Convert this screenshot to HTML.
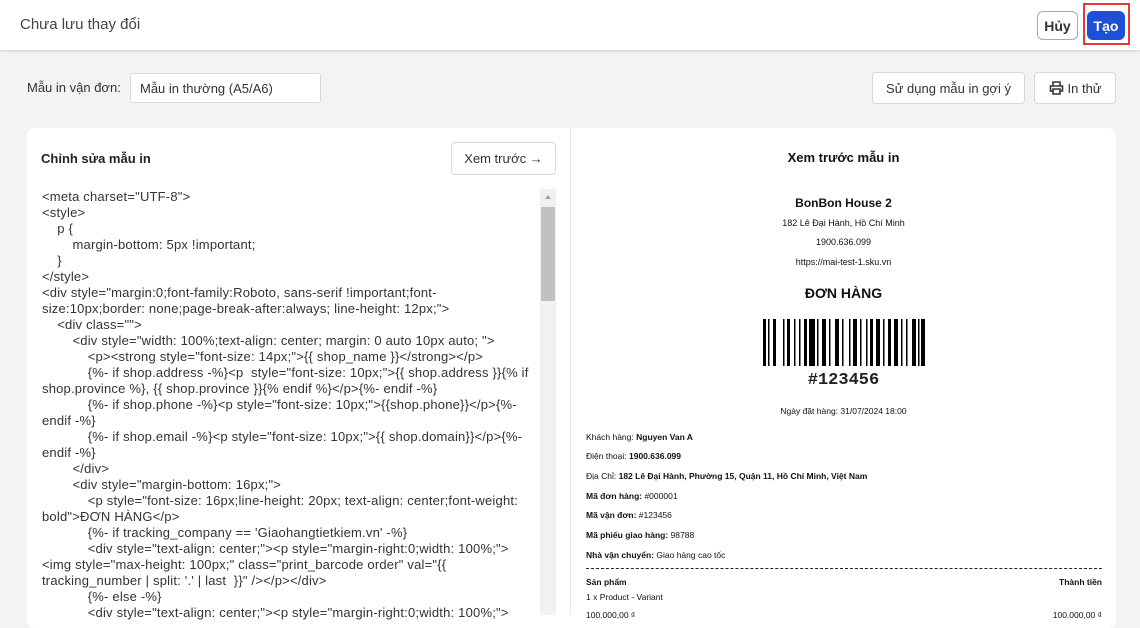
<!DOCTYPE html>
<html><head><meta charset="utf-8"><style>
*{margin:0;padding:0;box-sizing:border-box}
body{width:1140px;height:615px;overflow:hidden;background:#f2f3f5;font-family:"Liberation Sans",sans-serif;color:#222;position:relative}
.top{position:absolute;left:0;top:0;width:1140px;height:50px;background:#fff;box-shadow:0 1px 3px rgba(0,0,0,.15)}
.abs{position:absolute}
.btn{position:absolute;background:#fff;border:1px solid #d6d8dc;border-radius:4px;font-size:13px;color:#333;display:flex;align-items:center;justify-content:center}
.card{position:absolute;background:#fff;border-radius:8px}
.code{position:absolute;left:42px;top:189px;font-size:13px;line-height:16px;color:#333;white-space:pre;letter-spacing:0.2px}
.pv{position:absolute;left:571px;width:545px;text-align:center;color:#111}
.ln{position:absolute;left:586px;font-size:8.5px;color:#111;white-space:nowrap}
.ln b{font-weight:bold}
</style></head><body>
<div class="top"></div>
<div class="abs" style="left:20px;top:16px;font-size:15px;color:#444">Chưa lưu thay đổi</div>
<div class="btn" style="left:1037px;top:11px;width:41px;height:29px;border-color:#aaa;border-radius:6px;font-weight:bold;font-size:14px">Hủy</div>
<div class="abs" style="left:1083px;top:3px;width:47px;height:42px;border:2px solid #e53935"></div>
<div class="abs" style="left:1087px;top:11px;width:38px;height:29px;background:#1e4fd8;border-radius:6px;color:#fff;font-weight:bold;font-size:14px;display:flex;align-items:center;justify-content:center">Tạo</div>

<div class="abs" style="left:27px;top:80px;font-size:13px;color:#333">Mẫu in vận đơn:</div>
<div class="abs" style="left:130px;top:73px;width:191px;height:30px;background:#fff;border:1px solid #d6d8dc;border-radius:3px;font-size:13px;padding:7px 9px;color:#333">Mẫu in thường (A5/A6)</div>
<div class="btn" style="left:872px;top:72px;width:153px;height:32px">Sử dụng mẫu in gợi ý</div>
<div class="btn" style="left:1034px;top:72px;width:82px;height:32px"><svg width="15" height="14" viewBox="0 0 15 14" style="margin-right:4px"><path d="M4 5V1h7v4M4 10H1.5V5h12v5H11M4 8h7v5H4z" fill="none" stroke="#333" stroke-width="1.6"/></svg>In thử</div>

<div class="card" style="left:27px;top:128px;width:1089px;height:500px"></div>
<div class="abs" style="left:570px;top:128px;width:1px;height:487px;background:#e6e7ea"></div>
<div class="abs" style="left:41px;top:151px;font-size:13px;font-weight:bold;color:#222">Chỉnh sửa mẫu in</div>
<div class="btn" style="left:451px;top:142px;width:105px;height:33px">Xem trước →</div>
<div class="abs" style="left:540px;top:189px;width:16px;height:426px;background:#f1f1f1"></div>
<div class="abs" style="left:541px;top:207px;width:14px;height:94px;background:#c1c1c1"></div>
<div class="abs" style="left:545px;top:195px;width:0;height:0;border-left:3px solid transparent;border-right:3px solid transparent;border-bottom:4px solid #a3a3a3"></div>
<div class="code">&lt;meta charset="UTF-8"&gt;
&lt;style&gt;
    p {
        margin-bottom: 5px !important;
    }
&lt;/style&gt;
&lt;div style="margin:0;font-family:Roboto, sans-serif !important;font-
size:10px;border: none;page-break-after:always; line-height: 12px;"&gt;
    &lt;div class=""&gt;
        &lt;div style="width: 100%;text-align: center; margin: 0 auto 10px auto; "&gt;
            &lt;p&gt;&lt;strong style="font-size: 14px;"&gt;{{ shop_name }}&lt;/strong&gt;&lt;/p&gt;
            {%- if shop.address -%}&lt;p  style="font-size: 10px;"&gt;{{ shop.address }}{% if
shop.province %}, {{ shop.province }}{% endif %}&lt;/p&gt;{%- endif -%}
            {%- if shop.phone -%}&lt;p style="font-size: 10px;"&gt;{{shop.phone}}&lt;/p&gt;{%-
endif -%}
            {%- if shop.email -%}&lt;p style="font-size: 10px;"&gt;{{ shop.domain}}&lt;/p&gt;{%-
endif -%}
        &lt;/div&gt;
        &lt;div style="margin-bottom: 16px;"&gt;
            &lt;p style="font-size: 16px;line-height: 20px; text-align: center;font-weight:
bold"&gt;ĐƠN HÀNG&lt;/p&gt;
            {%- if tracking_company == 'Giaohangtietkiem.vn' -%}
            &lt;div style="text-align: center;"&gt;&lt;p style="margin-right:0;width: 100%;"&gt;
&lt;img style="max-height: 100px;" class="print_barcode order" val="{{
tracking_number | split: '.' | last  }}" /&gt;&lt;/p&gt;&lt;/div&gt;
            {%- else -%}
            &lt;div style="text-align: center;"&gt;&lt;p style="margin-right:0;width: 100%;"&gt;</div>

<div class="pv" style="top:150px;font-size:13px;font-weight:bold">Xem trước mẫu in</div>
<div class="pv" style="top:196px;font-size:12px;font-weight:bold">BonBon House 2</div>
<div class="pv" style="top:218px;font-size:9px">182 Lê Đại Hành, Hồ Chí Minh</div>
<div class="pv" style="top:237px;font-size:9px">1900.636.099</div>
<div class="pv" style="top:257px;font-size:9px">https://mai-test-1.sku.vn</div>
<div class="pv" style="top:285px;font-size:14px;font-weight:bold">ĐƠN HÀNG</div>
<svg class="abs" style="left:763px;top:319px" width="162" height="47" viewBox="0 0 162 47">
<g fill="#000">
<rect x="0" width="3" height="47"/><rect x="5" width="1.5" height="47"/><rect x="10" width="3" height="47"/><rect x="20" width="1.5" height="47"/><rect x="24" width="3" height="47"/><rect x="31" width="1.5" height="47"/><rect x="36" width="1.5" height="47"/><rect x="41" width="3" height="47"/><rect x="46" width="6" height="47"/><rect x="54" width="1.5" height="47"/><rect x="59" width="4" height="47"/><rect x="66" width="1.5" height="47"/><rect x="72" width="4" height="47"/><rect x="79" width="1.5" height="47"/><rect x="86" width="1.5" height="47"/><rect x="90" width="4" height="47"/><rect x="97" width="1.5" height="47"/><rect x="103" width="1.5" height="47"/><rect x="107" width="3" height="47"/><rect x="113" width="4" height="47"/><rect x="120" width="1.5" height="47"/><rect x="125" width="3" height="47"/><rect x="131" width="4" height="47"/><rect x="138" width="1.5" height="47"/><rect x="143" width="1.5" height="47"/><rect x="149" width="4" height="47"/><rect x="155" width="1.5" height="47"/><rect x="158" width="4" height="47"/>
</g></svg>
<div class="pv" style="top:371px;font-size:17px;font-weight:bold;font-family:'Liberation Mono',monospace;color:#222">#123456</div>
<div class="pv" style="top:406px;font-size:8.5px">Ngày đặt hàng: 31/07/2024 18:00</div>
<div class="ln" style="top:432px">Khách hàng: <b>Nguyen Van A</b></div>
<div class="ln" style="top:451px">Điện thoại: <b>1900.636.099</b></div>
<div class="ln" style="top:471px">Địa Chỉ: <b>182 Lê Đại Hành, Phường 15, Quận 11, Hồ Chí Minh, Việt Nam</b></div>
<div class="ln" style="top:491px"><b>Mã đơn hàng:</b> #000001</div>
<div class="ln" style="top:510px"><b>Mã vận đơn:</b> #123456</div>
<div class="ln" style="top:530px"><b>Mã phiếu giao hàng:</b> 98788</div>
<div class="ln" style="top:550px"><b>Nhà vận chuyển:</b> Giao hàng cao tốc</div>
<div class="abs" style="left:586px;top:568px;width:516px;border-top:1px dashed #222"></div>
<div class="ln" style="top:577px"><b>Sản phẩm</b></div>
<div class="ln" style="top:577px;left:auto;right:38px"><b>Thành tiền</b></div>
<div class="ln" style="top:592px">1 x Product - Variant</div>
<div class="ln" style="top:610px">100.000,00 ₫</div>
<div class="ln" style="top:610px;left:auto;right:38px">100.000,00 ₫</div>
</body></html>
